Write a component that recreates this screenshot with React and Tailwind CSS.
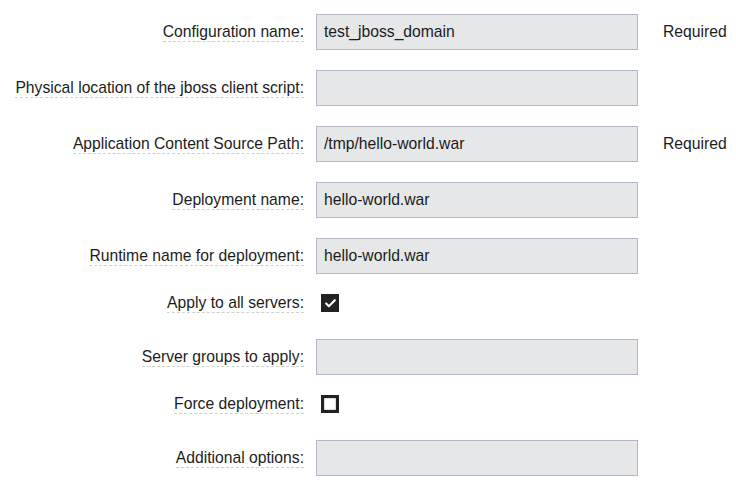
import { Check } from "lucide-react";

const rows = [
  { label: "Configuration name:", type: "text", value: "test_jboss_domain", required: true },
  { label: "Physical location of the jboss client script:", type: "text", value: "" },
  { label: "Application Content Source Path:", type: "text", value: "/tmp/hello-world.war", required: true },
  { label: "Deployment name:", type: "text", value: "hello-world.war" },
  { label: "Runtime name for deployment:", type: "text", value: "hello-world.war" },
  { label: "Apply to all servers:", type: "check", checked: true },
  { label: "Server groups to apply:", type: "text", value: "" },
  { label: "Force deployment:", type: "check", checked: false },
  { label: "Additional options:", type: "text", value: "" },
];

function Label({ text }) {
  return (
    <div className="w-[304px] shrink-0 flex justify-end">
      <span className="border-b border-dashed border-[#d0d0d0] leading-[19px]">{text}</span>
    </div>
  );
}

function Checkbox({ checked }) {
  if (checked) {
    return (
      <div className="w-[18px] h-[18px] bg-[#222222] flex items-center justify-center">
        <Check size={13} strokeWidth={4} color="#ffffff" />
      </div>
    );
  }
  return <div className="w-[18px] h-[18px] border-[3px] border-[#222222] bg-white shadow-[inset_0_0_2px_#888]"></div>;
}

export default function App() {
  return (
    <div
      className="w-[736px] h-[489px] bg-white text-[15.7px] text-[#1c1c1c] pt-[14px] flex flex-col gap-5"
      style={{ fontFamily: '"Liberation Sans", Arial, sans-serif' }}
    >
      {rows.map((row) =>
        row.type === "text" ? (
          <div key={row.label} className="flex items-center h-[36px]">
            <Label text={row.label} />
            <div className="ml-3 w-[322px] h-[36px] bg-[#e6e7e9] border border-[#b3b7c5] flex items-center pl-[7px]">
              {row.value}
            </div>
            {row.required && <span className="ml-[25px]">Required</span>}
          </div>
        ) : (
          <div key={row.label} className="flex items-center h-[18px] mb-[7px]">
            <Label text={row.label} />
            <div className="ml-[17px]">
              <Checkbox checked={row.checked} />
            </div>
          </div>
        )
      )}
    </div>
  );
}
